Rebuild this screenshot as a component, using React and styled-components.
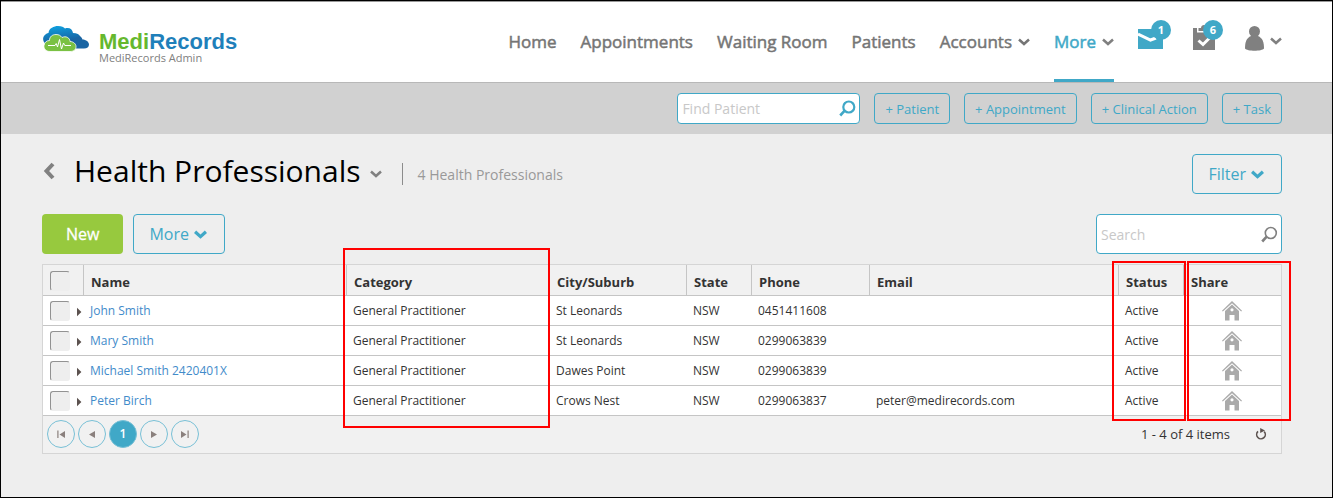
import React, { useState } from 'react';
import styled, { createGlobalStyle, css } from 'styled-components';

const GlobalStyle = createGlobalStyle`
    * {
        box-sizing: border-box;
    }

    body {
        margin: 0;
        background-color: #eeeeee;
        color: #333333;
        font-family: 'Open Sans', 'Noto Sans', sans-serif;
        font-size: 12px;
    }

    button, input {
        font-family: inherit;
    }
`;

const Page = styled.div`
    min-height: 100vh;
    border: 1px solid #000000;
`;

const StyledHeader = styled.header`
    display: flex;
    justify-content: space-between;
    height: 82px;
    padding: 0 50px 0 41px;
    background-color: #ffffff;
    border-top: 1px solid #999999;
    border-bottom: 1px solid #b8b8b8;
`;

const Brand = styled.a`
    display: flex;
    align-items: flex-start;
    gap: 9px;
    padding-top: 24px;
    text-decoration: none;
`;

const BrandText = styled.div`
    display: flex;
    flex-direction: column;
    padding-top: 5px;
`;

const BrandName = styled.span`
    font-family: 'Liberation Sans', Arial, sans-serif;
    font-size: 22px;
    line-height: 22px;
    font-weight: bold;
    color: #1f80ba;

    em {
        font-style: normal;
        color: #66b82e;
    }
`;

const BrandSub = styled.span`
    font-size: 11px;
    line-height: 10px;
    color: #808080;
`;

const Nav = styled.nav`
    display: flex;
    gap: 24px;
`;

const NavItem = styled.a`
    display: flex;
    align-items: center;
    gap: 6px;
    padding-top: 2px;
    border-bottom: 3px solid transparent;
    font-size: 17px;
    -webkit-text-stroke: 0.5px currentColor;
    color: #757575;
    text-decoration: none;

    ${({ $active }) => $active && css`
        color: #40a8c7;
        border-bottom-color: #40a8c7;
    `}
`;

const NavIcons = styled.div`
    display: flex;
    align-items: flex-start;
    padding-top: 23px;
    gap: 30px;
`;

const IconButton = styled.button`
    position: relative;
    display: flex;
    align-items: center;
    gap: 6px;
    padding: 0;
    border: none;
    background: none;
    color: #808080;
    cursor: pointer;

    svg + svg {
        margin-top: 6px;
    }
`;

const BackButton = styled(IconButton)`
    padding-bottom: 6px;
`;

const Badge = styled.span`
    position: absolute;
    top: -5px;
    right: -8px;
    width: 20px;
    height: 20px;
    border-radius: 50%;
    background-color: #40a8c7;
    color: #ffffff;
    font-size: 11px;
    font-weight: 700;
    line-height: 20px;
    text-align: center;
`;

const ActionBar = styled.div`
    display: flex;
    justify-content: flex-end;
    align-items: center;
    gap: 14px;
    height: 51px;
    padding: 0 50px 0 41px;
    background-color: #d1d1d1;
`;

const SearchBox = styled.label`
    display: flex;
    align-items: center;
    width: ${({ $width }) => $width}px;
    height: ${({ $tall }) => ($tall ? 40 : 31)}px;
    padding: 0 3px 0 4px;
    border: 1px solid #40a8c7;
    border-radius: 4px;
    background-color: #ffffff;

    input {
        flex: 1;
        min-width: 0;
        padding: 0;
        border: none;
        outline: none;
        background: none;
        font-size: 14px;
        color: #333333;
    }

    input::placeholder {
        color: #c8c8c8;
        opacity: 1;
    }
`;

const OutlineButton = styled.button`
    display: flex;
    align-items: center;
    gap: 5px;
    height: 31px;
    padding: 0 10px;
    border: 1px solid #40a8c7;
    border-radius: 4px;
    background: none;
    color: #40a8c7;
    font-size: 13px;
    cursor: pointer;

    ${({ $large }) => $large && css`
        height: 40px;
        padding: 0 17px 0 15px;
        font-size: 16px;
    `}
`;

const NewButton = styled.button`
    height: 40px;
    padding: 0 24px;
    border: none;
    border-radius: 4px;
    background-color: #97c93e;
    color: #ffffff;
    font-size: 16px;
    -webkit-text-stroke: 0.3px currentColor;
    cursor: pointer;
`;

const Main = styled.main`
    padding: 20px 50px 40px 41px;
`;

const Row = styled.div`
    display: flex;
    justify-content: space-between;
    align-items: center;
`;

const TitleRow = styled(Row)`
    margin-bottom: 20px;
`;

const TitleGroup = styled.div`
    display: flex;
    align-items: center;
    padding-left: 1px;
`;

const Title = styled.h1`
    margin: 0 9px 0 19px;
    padding-bottom: 6px;
    font-size: 30px;
    line-height: 34px;
    font-weight: 400;
    color: #000000;
`;

const Count = styled.span`
    display: flex;
    align-items: center;
    gap: 15px;
    margin-left: 20px;
    font-size: 14px;
    color: #999999;

    &::before {
        content: '';
        width: 1px;
        height: 22px;
        background-color: #8c8c8c;
    }
`;

const ButtonGroup = styled.div`
    display: flex;
    gap: 10px;
`;

const Grid = styled.section`
    margin-top: 10px;
    border: 1px solid #d5d5d5;
    background-color: #f1f1f1;
`;

const Table = styled.table`
    width: 100%;
    table-layout: fixed;
    border-collapse: separate;
    border-spacing: 0;
`;

const HeadCell = styled.th`
    position: relative;
    width: ${({ $width }) => ($width ? `${$width}px` : 'auto')};
    height: 31px;
    padding: 4px 0 0 7px;
    border-left: 1px solid #c5c5c5;
    border-bottom: 1px solid #c5c5c5;
    font-size: 13px;
    line-height: 18px;
    font-weight: 700;
    text-align: left;
    color: #333333;

    &:first-child {
        padding-top: 2px;
        border-left: none;
    }
`;

const Cell = styled.td`
    height: 30px;
    padding: 0 0 0 7px;
    border-bottom: 1px solid #c5c5c5;
    background-color: #ffffff;
    font-size: 12px;
    line-height: 16px;
    white-space: nowrap;

    a {
        color: #428bca;
        text-decoration: none;
    }

    svg {
        display: block;
    }
`;

const CenterCell = styled(Cell)`
    padding: 0;

    svg {
        margin: 0 auto;
    }
`;

const SelectCell = styled.div`
    display: flex;
    align-items: center;
    gap: 7px;
`;

const Checkbox = styled.input`
    appearance: none;
    flex: none;
    display: block;
    width: 20px;
    height: 20px;
    margin: 0;
    border: 1px solid #eeeeee;
    border-top-color: #929292;
    border-left-color: #929292;
    border-radius: 3px;
    background-color: #eeeeee;

    &:checked {
        background-color: #40a8c7;
    }
`;

const ExpandButton = styled.button`
    display: flex;
    padding: 2px 0 0;
    border: none;
    background: none;
    cursor: pointer;
`;

// red frame drawn over a whole column
const Highlight = styled.span`
    position: absolute;
    z-index: 1;
    top: ${({ $box }) => $box.top}px;
    left: ${({ $box }) => $box.left}px;
    right: ${({ $box }) => $box.right}px;
    height: ${({ $box }) => $box.height}px;
    border: 2px solid #ff0000;
    pointer-events: none;
`;

const Footer = styled.div`
    display: flex;
    justify-content: space-between;
    align-items: center;
    height: 37px;
    padding: 0 14px 2px 4px;
`;

const Pages = styled.div`
    display: flex;
    gap: 3px;
`;

const PageButton = styled.button`
    display: flex;
    align-items: center;
    justify-content: center;
    width: 28px;
    height: 28px;
    padding: 0;
    border: 1px solid #78c0d6;
    border-radius: 50%;
    background-color: ${({ $current }) => ($current ? '#40a8c7' : 'transparent')};
    color: #ffffff;
    font-size: 12px;
    font-weight: 600;
    cursor: pointer;
`;

const Items = styled.div`
    display: flex;
    align-items: center;
    gap: 25px;
    font-size: 13px;
`;

const Chevron = ({ width = 12, height = 8, stroke = 3, color = 'currentColor' }) => (
    <svg width={width} height={height} viewBox="0 0 12 8" fill="none" stroke={color} strokeWidth={stroke}>
        <path d="M1 1.5 L6 6 L11 1.5" />
    </svg>
);

const BackIcon = () => (
    <svg width="12" height="18" viewBox="0 0 12 18" fill="none" stroke="#808080" strokeWidth="4">
        <path d="M10 2 L3.5 9 L10 16" />
    </svg>
);

const CloudLogo = () => (
    <svg width="48" height="28" viewBox="0 0 48 28">
        <defs>
            <linearGradient id="cloudBlue" x1="0" y1="0" x2="0.3" y2="1">
                <stop offset="0" stopColor="#0ea5e4" />
                <stop offset="1" stopColor="#175f9f" />
            </linearGradient>
        </defs>
        <path fill="#1a65a3" d="M28 22.5 C25 14 29 9.5 34 9 C38 9 40 11.5 40.5 13.5 C44 13.5 47 16 47 18.5 C47 21 45 22.5 42 22.5 Z" />
        <path fill="url(#cloudBlue)" d="M3 17.5 C-1 13 2 8 6.5 7 C7 2 12 0 16 0 C20 0 21.5 1 23 2.5 C27 1 30.5 3 31 7 C35 7 37.5 8.5 38 10.5 C34 11 31 13 30 17 Z" />
        <path fill="#7ac143" stroke="#ffffff" strokeWidth="0.8" d="M8 25.5 C4 25.5 1.5 22.5 2 19.5 C2.4 16.5 4.5 14.5 7.5 14.5 C7.5 10.5 10.5 8.5 14 8.5 C17 8.5 18.5 9.5 20 11.5 C24 9.5 28 12 28 15.5 C31.5 15.5 34 18 34 20.5 C34 23.5 32 25.5 28 25.5 Z" />
        <path fill="none" stroke="#ffffff" strokeWidth="1" d="M6 19.5 H13 L14.2 17.5 L15.5 21 L17.5 13.5 L19.5 23 L21.5 17 L22.8 19.5 H29" />
    </svg>
);

const MailIcon = () => (
    <svg width="25" height="26" viewBox="0 0 25 26">
        <rect y="4" width="25" height="20" fill="#40a8c7" />
        <path d="M0 9 L12.5 15 L18 13" fill="none" stroke="#ffffff" strokeWidth="3" />
    </svg>
);

const ClipboardIcon = () => (
    <svg width="22" height="26" viewBox="0 0 22 26">
        <path fill="#808080" d="M0 3 H4 V7.5 H18 V3 H22 V25 H0 Z M5.5 3 H8 C8 1 9.5 0 11 0 C12.5 0 14 1 14 3 H16.5 V6 H5.5 Z" />
        <path d="M5.5 15.5 L10 19.5 L16.5 13" fill="none" stroke="#ffffff" strokeWidth="3" />
    </svg>
);

const UserIcon = () => (
    <svg width="19" height="26" viewBox="0 0 19 26" fill="#808080">
        <circle cx="9.5" cy="6.5" r="5.5" />
        <path d="M0 23.5 C0 17 1.5 13 6 11 H13 C17.5 13 19 17 19 23.5 C17 26.5 2 26.5 0 23.5 Z" />
    </svg>
);

const SearchIcon = ({ size, color, stroke }) => (
    <svg width={size} height={size} viewBox="0 0 17 17" fill="none" stroke={color} strokeWidth={stroke}>
        <circle cx="9.8" cy="7" r="5.5" />
        <path d="M5.7 10.7 L1.2 15.5" strokeWidth="2.6" />
    </svg>
);

const HouseIcon = () => (
    <svg width="20" height="20" viewBox="0 0 20 20" fill="#aaaaaa">
        <path d="M0 9.8 L10 0 L20 9.8 L19.2 10.6 L10 2.2 L0.8 10.6 Z" />
        <path fillRule="evenodd" d="M10 3.6 L17 10 V19.5 H12.5 V14 H7.5 V19.5 H3 V10 Z M10 7.2 A1.6 1.6 0 1 0 10 10.4 A1.6 1.6 0 1 0 10 7.2 Z" />
    </svg>
);

const ExpandIcon = () => (
    <svg width="5" height="10" viewBox="0 0 5 10">
        <path d="M0 0.8 L4.4 5 L0 9.2 Z" fill="#5c524f" />
    </svg>
);

const PagerIcon = ({ flip, bar }) => (
    <svg width="8" height="8" viewBox="0 0 8 8" fill="#8a807d">
        <g transform={flip ? 'translate(8 0) scale(-1 1)' : undefined}>
            <path d={bar ? 'M0 1 L5.5 4.5 L0 8 Z' : 'M1 1 L7 4.5 L1 8 Z'} />
            {bar && <rect x="6.5" y="0.5" width="1.2" height="7.5" />}
        </g>
    </svg>
);

const RefreshIcon = () => (
    <svg width="12" height="12" viewBox="0 0 12 12">
        <path d="M3 3.4 A4.3 4.3 0 1 0 9.2 3.6" fill="none" stroke="#5c524f" strokeWidth="1.6" />
        <path d="M5.2 0 L10 2.6 L5.2 5 Z" fill="#5c524f" />
    </svg>
);

const columns = [
    { label: 'Name', width: 263 },
    { label: 'Category', width: 203, box: { top: -17, left: -4, right: -1, height: 180 } },
    { label: 'City/Suburb', width: 137 },
    { label: 'State', width: 65 },
    { label: 'Phone', width: 118 },
    { label: 'Email' },
    { label: 'Status', width: 65, box: { top: -4, left: -7, right: -3, height: 160 } },
    { label: 'Share', width: 98, box: { top: -4, left: 3, right: -10, height: 160 } },
];

const people = [
    { name: 'John Smith', city: 'St Leonards', phone: '0451411608' },
    { name: 'Mary Smith', city: 'St Leonards', phone: '0299063839' },
    { name: 'Michael Smith 2420401X', city: 'Dawes Point', phone: '0299063839' },
    { name: 'Peter Birch', city: 'Crows Nest', phone: '0299063837', email: 'peter@medirecords.com' },
];

const Header = () => (
    <StyledHeader>
        <Brand href="#">
            <CloudLogo />
            <BrandText>
                <BrandName><em>Medi</em>Records</BrandName>
                <BrandSub>MediRecords Admin</BrandSub>
            </BrandText>
        </Brand>
        <Nav>
            <NavItem href="#">Home</NavItem>
            <NavItem href="#">Appointments</NavItem>
            <NavItem href="#">Waiting Room</NavItem>
            <NavItem href="#">Patients</NavItem>
            <NavItem href="#">Accounts <Chevron stroke={2.5} /></NavItem>
            <NavItem href="#" $active>More <Chevron stroke={2.5} color="#808080" /></NavItem>
            <NavIcons>
                <IconButton aria-label="Messages"><MailIcon /><Badge>1</Badge></IconButton>
                <IconButton aria-label="Tasks"><ClipboardIcon /><Badge>6</Badge></IconButton>
                <IconButton aria-label="Account"><UserIcon /><Chevron stroke={2.5} /></IconButton>
            </NavIcons>
        </Nav>
    </StyledHeader>
);

const App = () => {

    const [selected, setSelected] = useState([]);

    const toggle = (name) => {
        setSelected(selected.includes(name) ? selected.filter((n) => n !== name) : [...selected, name]);
    }

    const toggleAll = () => {
        setSelected(selected.length === people.length ? [] : people.map((p) => p.name));
    }

    return (
        <Page>
            <GlobalStyle />
            <Header />
            <ActionBar>
                <SearchBox $width={183}>
                    <input type="text" placeholder="Find Patient" aria-label="Find Patient" />
                    <SearchIcon size={17} color="#40a8c7" stroke={2.2} />
                </SearchBox>
                <OutlineButton>+ Patient</OutlineButton>
                <OutlineButton>+ Appointment</OutlineButton>
                <OutlineButton>+ Clinical Action</OutlineButton>
                <OutlineButton>+ Task</OutlineButton>
            </ActionBar>
            <Main>
                <TitleRow>
                    <TitleGroup>
                        <BackButton aria-label="Back"><BackIcon /></BackButton>
                        <Title>Health Professionals</Title>
                        <IconButton aria-label="Change list"><Chevron stroke={2.5} /></IconButton>
                        <Count>4 Health Professionals</Count>
                    </TitleGroup>
                    <OutlineButton $large>Filter <Chevron width={13} height={9} /></OutlineButton>
                </TitleRow>
                <Row>
                    <ButtonGroup>
                        <NewButton>New</NewButton>
                        <OutlineButton $large>More <Chevron width={13} height={9} /></OutlineButton>
                    </ButtonGroup>
                    <SearchBox $width={186} $tall>
                        <input type="text" placeholder="Search" aria-label="Search" />
                        <SearchIcon size={17} color="#808080" stroke={1.6} />
                    </SearchBox>
                </Row>
                <Grid>
                    <Table>
                        <thead>
                            <tr>
                                <HeadCell $width={40}>
                                    <Checkbox
                                        type="checkbox"
                                        aria-label="Select all"
                                        checked={selected.length === people.length}
                                        onChange={toggleAll}
                                    />
                                </HeadCell>
                                {columns.map(({ label, width, box }) => (
                                    <HeadCell key={label} $width={width}>
                                        {label}
                                        {box && <Highlight $box={box} />}
                                    </HeadCell>
                                ))}
                            </tr>
                        </thead>
                        <tbody>
                            {people.map(({ name, city, phone, email }) => (
                                <tr key={name}>
                                    <Cell>
                                        <SelectCell>
                                            <Checkbox
                                                type="checkbox"
                                                aria-label={`Select ${name}`}
                                                checked={selected.includes(name)}
                                                onChange={() => toggle(name)}
                                            />
                                            <ExpandButton aria-label={`Expand ${name}`}><ExpandIcon /></ExpandButton>
                                        </SelectCell>
                                    </Cell>
                                    <Cell><a href="#">{name}</a></Cell>
                                    <Cell>General Practitioner</Cell>
                                    <Cell>{city}</Cell>
                                    <Cell>NSW</Cell>
                                    <Cell>{phone}</Cell>
                                    <Cell>{email}</Cell>
                                    <Cell>Active</Cell>
                                    <CenterCell><HouseIcon /></CenterCell>
                                </tr>
                            ))}
                        </tbody>
                    </Table>
                    <Footer>
                        <Pages>
                            <PageButton aria-label="First page"><PagerIcon flip bar /></PageButton>
                            <PageButton aria-label="Previous page"><PagerIcon flip /></PageButton>
                            <PageButton $current>1</PageButton>
                            <PageButton aria-label="Next page"><PagerIcon /></PageButton>
                            <PageButton aria-label="Last page"><PagerIcon bar /></PageButton>
                        </Pages>
                        <Items>
                            1 - 4 of 4 items
                            <IconButton aria-label="Refresh"><RefreshIcon /></IconButton>
                        </Items>
                    </Footer>
                </Grid>
            </Main>
        </Page>
    );
};

export default App;
